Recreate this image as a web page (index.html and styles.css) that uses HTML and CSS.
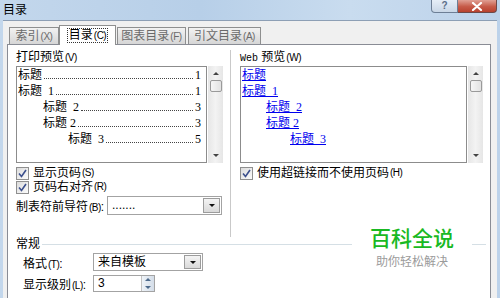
FILE: index.html
```html
<!DOCTYPE html>
<html lang="zh">
  <head>
    <meta charset="UTF-8" />
    <title>目录</title>
    <link rel="stylesheet" href="styles.css">
  </head>
  <body>
    <div class="window">
      <div class="titlebar">
        <span class="title">目录</span>
        <div class="caption">
          <span class="cap-help">?</span>
          <span class="cap-close">
            <svg width="12" height="9" viewBox="0 0 12 9"><path d="M2 1 L10 8 M10 1 L2 8" stroke="#fff" stroke-width="2.2" stroke-linecap="round"/></svg>
          </span>
        </div>
      </div>

      <div class="client">
        <div class="tabs">
          <div class="tab t1">索引<span class="acc">(X)</span></div>
          <div class="tab t2 active"><span class="focus">目录<span class="acc">(C)</span></span></div>
          <div class="tab t3">图表目录<span class="acc">(F)</span></div>
          <div class="tab t4">引文目录<span class="acc">(A)</span></div>
        </div>

        <div class="page">
          <div class="columns">
            <!-- print preview -->
            <div class="col col-left">
              <div class="label">打印预览<span class="acc">(V)</span></div>
              <div class="preview">
                <div class="list">
                  <div class="entry lv1"><span>标题</span><span class="dots"></span><span>1</span></div>
                  <div class="entry lv1"><span>标题&nbsp; 1</span><span class="dots"></span><span>1</span></div>
                  <div class="entry lv2"><span>标题&nbsp; 2</span><span class="dots"></span><span>3</span></div>
                  <div class="entry lv2"><span>标题 2</span><span class="dots"></span><span>3</span></div>
                  <div class="entry lv3"><span>标题&nbsp; 3</span><span class="dots"></span><span>5</span></div>
                </div>
                <div class="scrollbar">
                  <span class="arrow-up"></span>
                  <span class="thumb"></span>
                  <span class="arrow-down"></span>
                </div>
              </div>
              <label class="check">
                <span class="box"><svg width="11" height="11" viewBox="0 0 11 11"><path d="M2 5.5 L4.5 8.5 L9 2" fill="none" stroke="#3b4f8c" stroke-width="1.6"/></svg></span>
                显示页码<span class="acc">(S)</span>
              </label>
              <label class="check">
                <span class="box"><svg width="11" height="11" viewBox="0 0 11 11"><path d="M2 5.5 L4.5 8.5 L9 2" fill="none" stroke="#3b4f8c" stroke-width="1.6"/></svg></span>
                页码右对齐<span class="acc">(R)</span>
              </label>
              <div class="field-row">
                <span class="field-label">制表符前导符<span class="acc">(B)</span>:</span>
                <div class="combo leader">
                  <span class="combo-text">.......</span>
                  <span class="drop"><span class="tri"></span></span>
                </div>
              </div>
            </div>

            <div class="divider"></div>

            <!-- web preview -->
            <div class="col col-right">
              <div class="label"><span class="web">Web</span> 预览<span class="acc">(W)</span></div>
              <div class="preview">
                <div class="list web-list">
                  <div class="link lv1"><a>标题</a></div>
                  <div class="link lv1"><a>标题&nbsp; 1</a></div>
                  <div class="link lv2"><a>标题&nbsp; 2</a></div>
                  <div class="link lv2"><a>标题 2</a></div>
                  <div class="link lv3"><a>标题&nbsp; 3</a></div>
                </div>
                <div class="scrollbar">
                  <span class="arrow-up"></span>
                  <span class="thumb"></span>
                  <span class="arrow-down"></span>
                </div>
              </div>
              <label class="check">
                <span class="box"><svg width="11" height="11" viewBox="0 0 11 11"><path d="M2 5.5 L4.5 8.5 L9 2" fill="none" stroke="#3b4f8c" stroke-width="1.6"/></svg></span>
                使用超链接而不使用页码<span class="acc">(H)</span>
              </label>
            </div>
          </div>

          <!-- general group -->
          <div class="group">
            <div class="group-head">
              <span>常规</span>
              <span class="group-line"></span>
            </div>
            <div class="group-row">
              <span class="row-label">格式<span class="acc">(T)</span>:</span>
              <div class="combo format">
                <span class="combo-text">来自模板</span>
                <span class="drop"><span class="tri"></span></span>
              </div>
            </div>
            <div class="group-row">
              <span class="row-label">显示级别<span class="acc">(L)</span>:</span>
              <div class="spin">
                <span class="combo-text">3</span>
                <span class="spin-btns">
                  <span class="spin-up"></span>
                  <span class="spin-down"></span>
                </span>
              </div>
            </div>
          </div>
        </div>
      </div>

      <div class="watermark">
        <div class="wm-title">百科全说</div>
        <div class="wm-sub">助你轻松解决</div>
      </div>
    </div>
  </body>
</html>
```

FILE: styles.css
```css
body {
  margin: 0;
  width: 500px;
  height: 298px;
  overflow: hidden;
  font-family: "Liberation Sans", "Noto Sans CJK SC", sans-serif;
  font-size: 12px;
  color: #000;
}

.window {
  position: relative;
  width: 500px;
  height: 298px;
  background: linear-gradient(90deg, #c3d7ec 0%, #b7cfe8 40%, #c9dcef 70%, #bcd2ea 100%);
  display: flex;
  flex-direction: column;
}

/* accelerator keys, drawn a bit narrower like the dialog font */
.acc {
  font-size: 10px;
  letter-spacing: -0.5px;
  margin-left: 1px;
}

/* title bar */
.titlebar {
  height: 20px;
  display: flex;
  align-items: flex-start;
  padding: 0 3px;
}

.title {
  line-height: 20px;
  font-size: 12px;
}

.caption {
  margin-left: auto;
  display: flex;
}

.cap-help {
  width: 25px;
  height: 12px;
  border: 1px solid #6d7f96;
  border-top: none;
  border-radius: 0 0 0 4px;
  background: linear-gradient(#e6eef7, #c9d7e7);
  color: #5b6f89;
  font-size: 10px;
  line-height: 11px;
  text-align: center;
  font-weight: bold;
}

.cap-close {
  width: 38px;
  height: 12px;
  border: 1px solid #6d4848;
  border-left: none;
  border-top: none;
  border-radius: 0 0 4px 0;
  background: linear-gradient(#e0a094, #c65a48 55%, #b8422f);
  display: flex;
  align-items: center;
  justify-content: center;
}

/* client area */
.client {
  flex: 1;
  margin: 0 3px;
  background: #f0f0f0;
  border-top: 1px solid #8d9fb5;
  display: flex;
  flex-direction: column;
}

.tabs {
  height: 23px;
  padding-left: 6px;
  display: flex;
  align-items: flex-end;
}

.tab {
  height: 16px;
  line-height: 16px;
  border: 1px solid #8e8f8f;
  border-bottom: none;
  background: linear-gradient(#f2f2f2, #d6d6d6);
  color: #6a6a6a;
  text-align: center;
  margin-right: 2px;
  white-space: nowrap;
}

.t1 { width: 48px; }
.t3 { width: 67px; margin-left: 2px; }
.t4 { width: 71px; }

.tab.active {
  width: 55px;
  height: 19px;
  line-height: 19px;
  margin: 0 -1px -1px -2px;
  background: #fff;
  color: #000;
  position: relative;
  z-index: 1;
}

.focus {
  border: 1px dotted #333;
  padding: 0 1px;
  line-height: 13px;
  display: inline-block;
}

.page {
  flex: 1;
  margin: 0 6px 0 4px;
  background: #fff;
  border: 1px solid #898c95;
  border-bottom: none;
  padding-left: 8px;
}

.columns {
  display: flex;
  height: 187px;
  margin-top: 5px;
}

.col-left {
  width: 207px;
}

.divider {
  width: 1px;
  margin-left: 7px;
  background: #c9c9c9;
}

.col-right {
  width: 243px;
  margin-left: 9px;
}

.label {
  line-height: 14px;
  height: 14px;
}

.web {
  font-family: "Liberation Mono", monospace;
  font-size: 10px;
}

.preview {
  display: flex;
  height: 97px;
  margin-top: 2px;
}

.list {
  flex: 1;
  border: 1px solid #8c8c8c;
  padding: 0 5px 0 1px;
  font-family: "Liberation Serif", "Noto Sans CJK SC", serif;
  font-size: 12px;
}

.entry,
.link {
  display: flex;
  height: 16px;
  line-height: 16px;
  white-space: nowrap;
}

.list .lv2 { padding-left: 25px; }
.list .lv3 { padding-left: 50px; }
.web-list .lv2 { padding-left: 24px; }
.web-list .lv3 { padding-left: 48px; }

.dots {
  flex: 1;
  margin: 0 2px;
  border-bottom: 1px dotted #444;
  height: 11px;
}

.link a {
  color: #0000ee;
  text-decoration: underline;
}

.scrollbar {
  width: 15px;
  margin-left: 1px;
  background: linear-gradient(90deg, #e6e6e6, #f3f3f3 50%, #e6e6e6);
  display: flex;
  flex-direction: column;
  align-items: center;
}

.arrow-up {
  margin-top: 6px;
  border: 3px solid transparent;
  border-top: none;
  border-bottom: 3px solid #444;
}

.thumb {
  margin-top: 5px;
  width: 12px;
  height: 12px;
  border: 1px solid #9a9a9a;
  border-radius: 2px;
  background: linear-gradient(90deg, #f6f6f6, #e2e2e2);
  box-sizing: border-box;
}

.arrow-down {
  margin-top: auto;
  margin-bottom: 6px;
  border: 3px solid transparent;
  border-bottom: none;
  border-top: 3px solid #444;
}

/* checkboxes */
.check {
  display: flex;
  align-items: center;
  height: 14px;
  line-height: 14px;
  margin-top: 3px;
  white-space: nowrap;
}

.check + .check {
  margin-top: 0;
}

.box {
  width: 11px;
  height: 11px;
  border: 1px solid #8f8f8f;
  background: linear-gradient(135deg, #dcdcdc, #fbfbfb);
  margin-right: 4px;
  display: flex;
}

/* combo boxes */
.field-row {
  display: flex;
  align-items: center;
  margin-top: 2px;
}

.field-label {
  width: 91px;
  flex-shrink: 0;
  white-space: nowrap;
}

.combo,
.spin {
  display: flex;
  border: 1px solid #a3a3a3;
  background: #fff;
  box-sizing: border-box;
}

.combo-text {
  flex: 1;
  padding-left: 4px;
}

.leader {
  width: 115px;
  height: 19px;
  line-height: 17px;
}

.drop {
  width: 15px;
  border: 1px solid #9c9c9c;
  margin: 1px;
  background: linear-gradient(#f4f4f4, #d9d9d9);
  display: flex;
  align-items: center;
  justify-content: center;
}

.tri {
  border: 3px solid transparent;
  border-bottom: none;
  border-top: 3px solid #111;
}

/* general group */
.group-head {
  display: flex;
  align-items: center;
  line-height: 14px;
  height: 14px;
}

.group-line {
  flex: 1;
  height: 1px;
  margin: 0 4px 0 2px;
  background: #d5dfe5;
}

.group-row {
  display: flex;
  align-items: center;
  margin-top: 2px;
}

.group-row + .group-row {
  margin-top: 4px;
}

.row-label {
  width: 70px;
  padding-left: 7px;
  white-space: nowrap;
}

.format {
  width: 110px;
  height: 18px;
  line-height: 16px;
}

.spin {
  width: 62px;
  height: 17px;
  line-height: 15px;
}

.spin-btns {
  width: 12px;
  display: flex;
  flex-direction: column;
  border-left: 1px solid #c3c3c3;
  background: linear-gradient(90deg, #eef3f8, #d4dde8);
}

.spin-up,
.spin-down {
  flex: 1;
  display: flex;
  align-items: center;
  justify-content: center;
}

.spin-up::after {
  content: "";
  border: 3px solid transparent;
  border-top: none;
  border-bottom: 3px solid #4d6a8c;
}

.spin-down::after {
  content: "";
  border: 3px solid transparent;
  border-bottom: none;
  border-top: 3px solid #4d6a8c;
}

/* watermark */
.watermark {
  position: absolute;
  left: 352px;
  top: 224px;
  width: 120px;
  height: 46px;
  background: #fff;
  text-align: center;
}

.wm-title {
  color: #19b923;
  font-size: 21px;
  line-height: 26px;
  font-family: "Noto Sans CJK SC", sans-serif;
  font-weight: 500;
}

.wm-sub {
  color: #9b9b9b;
  font-size: 12px;
  line-height: 22px;
  font-family: "Noto Sans CJK SC", sans-serif;
}
```
